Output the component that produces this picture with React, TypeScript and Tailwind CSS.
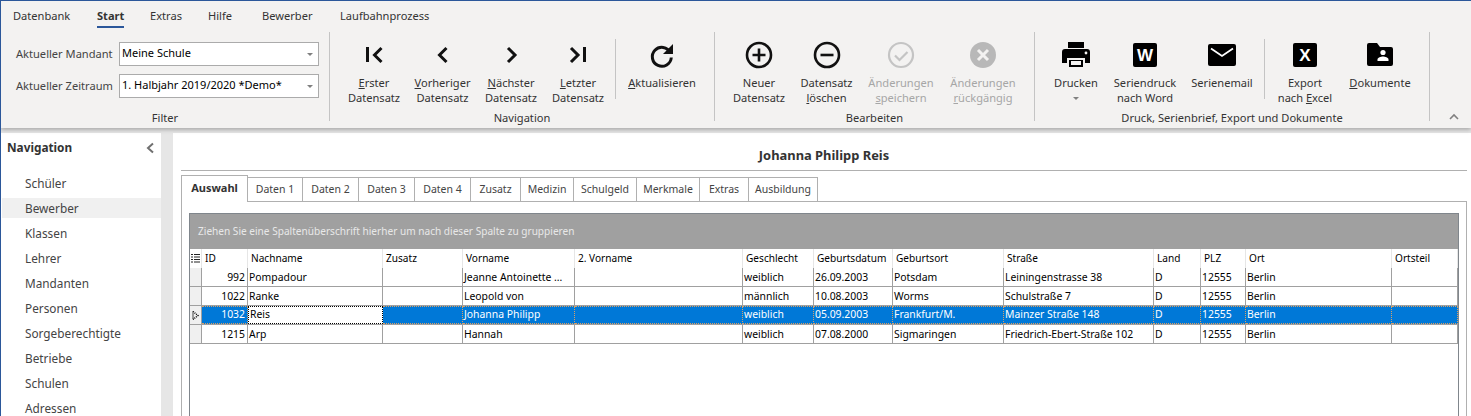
import React from 'react';

const navItems = ['Schüler', 'Bewerber', 'Klassen', 'Lehrer', 'Mandanten', 'Personen', 'Sorgeberechtigte', 'Betriebe', 'Schulen', 'Adressen'];

const tabs = [
  { label: 'Daten 1', w: 'w-[55px]' },
  { label: 'Daten 2', w: 'w-[56px]' },
  { label: 'Daten 3', w: 'w-[56px]' },
  { label: 'Daten 4', w: 'w-[56px]' },
  { label: 'Zusatz', w: 'w-[50px]' },
  { label: 'Medizin', w: 'w-[53px]' },
  { label: 'Schulgeld', w: 'w-[63px]' },
  { label: 'Merkmale', w: 'w-[63px]' },
  { label: 'Extras', w: 'w-[49px]' },
  { label: 'Ausbildung', w: 'w-[69px]' },
];

const columns = ['ID', 'Nachname', 'Zusatz', 'Vorname', '2. Vorname', 'Geschlecht', 'Geburtsdatum', 'Geburtsort', 'Straße', 'Land', 'PLZ', 'Ort', 'Ortsteil'];

const rows = [
  ['992', 'Pompadour', '', 'Jeanne Antoinette ...', '', 'weiblich', '26.09.2003', 'Potsdam', 'Leiningenstrasse 38', 'D', '12555', 'Berlin', ''],
  ['1022', 'Ranke', '', 'Leopold von', '', 'männlich', '10.08.2003', 'Worms', 'Schulstraße 7', 'D', '12555', 'Berlin', ''],
  ['1032', 'Reis', '', 'Johanna Philipp', '', 'weiblich', '05.09.2003', 'Frankfurt/M.', 'Mainzer Straße 148', 'D', '12555', 'Berlin', ''],
  ['1215', 'Arp', '', 'Hannah', '', 'weiblich', '07.08.2000', 'Sigmaringen', 'Friedrich-Ebert-Straße 102', 'D', '12555', 'Berlin', ''],
];

const gridCols = 'grid grid-cols-[12px_46px_135px_80px_112px_168px_71px_79px_111px_150px_47px_45px_146px_66px]';

const Icon: React.FC<{ children: React.ReactNode }> = ({ children }) => (
  <svg width="32" height="32" viewBox="0 0 32 32" className="shrink-0">{children}</svg>
);

const RibbonButton: React.FC<{ w: string; icon: React.ReactNode; disabled?: boolean; children: React.ReactNode }> = ({ w, icon, disabled, children }) => (
  <div className={`${w} flex flex-col items-center pt-[7px] text-center leading-[15px] ${disabled ? 'text-[#a6a6a6]' : 'text-[#333]'}`}>
    <Icon>{icon}</Icon>
    <div className="mt-[4px] whitespace-nowrap">{children}</div>
  </div>
);

const InnerSep = () => <div className="w-px h-[60px] mt-[7px] bg-[#c4c4c4] shrink-0" />;
const OuterSep = () => <div className="w-px h-[89px] bg-[#c4c4c4] shrink-0" />;

const Section: React.FC<{ w: string; label: string; children: React.ReactNode }> = ({ w, label, children }) => (
  <div className={`${w} flex shrink-0`}>
    <div className="flex-1 flex flex-col min-w-0">
      <div className="h-[78px] flex pl-[10px]">{children}</div>
      <div className="h-[16px] leading-[16px] text-center text-[#333]">{label}</div>
    </div>
    <OuterSep />
  </div>
);

const Combo: React.FC<{ label: string; value: string }> = ({ label, value }) => (
  <div className="flex items-center">
    <div className="w-[103px] text-[#444] whitespace-nowrap">{label}</div>
    <div className="w-[200px] h-[24px] bg-white border border-[#ababab] flex items-center justify-between pl-[2px] pr-[5px] pb-[2px] text-black text-[11px]">
      <span className="whitespace-nowrap">{value}</span>
      <span className="w-0 h-0 mt-[2px] border-x-[3px] border-x-transparent border-t-[3px] border-t-[#808080]" />
    </div>
  </div>
);

export default function App() {
  return (
    <div className="w-[1471px] h-[416px] overflow-hidden bg-[#e6e6e6] border-l border-t border-[#2b579a] font-['Noto_Sans',sans-serif] text-[11.1px] flex flex-col">
      <div className="relative z-10 bg-[#f3f2f1] h-[127px] shrink-0 shadow-[0_2px_4px_rgba(0,0,0,0.25)]">
        <div className="h-[31px] flex items-start text-[#333] pt-[7px]">
          <div className="ml-[12px] w-[84px]">Datenbank</div>
          <div className="w-[53px] font-bold">
            <span className="inline-block border-b-[2px] border-[#2b579a] pb-[1px]">Start</span>
          </div>
          <div className="w-[58px]">Extras</div>
          <div className="w-[54px]">Hilfe</div>
          <div className="w-[78px]">Bewerber</div>
          <div>Laufbahnprozess</div>
        </div>
        <div className="flex">
          <div className="w-[329px] flex shrink-0">
            <div className="flex-1 flex flex-col">
              <div className="h-[78px] pl-[15px] pt-[10px] flex flex-col gap-[8px]">
                <Combo label="Aktueller Mandant" value="Meine Schule" />
                <Combo label="Aktueller Zeitraum" value="1. Halbjahr 2019/2020 *Demo*" />
              </div>
              <div className="h-[16px] leading-[16px] text-center text-[#333]">Filter</div>
            </div>
            <OuterSep />
          </div>

          <Section w="w-[385px]" label="Navigation">
            <RibbonButton w="w-[68px]" icon={<g fill="none" stroke="#111" strokeWidth="3"><path d="M9.5 8v15" /><path d="M23.5 9l-7 7 7 7" /></g>}>
              <u>E</u>rster<br />Datensatz
            </RibbonButton>
            <RibbonButton w="w-[69px]" icon={<path d="M19.5 9l-7 7 7 7" fill="none" stroke="#111" strokeWidth="3" />}>
              <u>V</u>orheriger<br />Datensatz
            </RibbonButton>
            <RibbonButton w="w-[68px]" icon={<path d="M13 9l7 7-7 7" fill="none" stroke="#111" strokeWidth="3" />}>
              <u>N</u>ächster<br />Datensatz
            </RibbonButton>
            <RibbonButton w="w-[66px]" icon={<g fill="none" stroke="#111" strokeWidth="3"><path d="M9 9l7 7-7 7" /><path d="M22.5 8v15" /></g>}>
              <u>L</u>etzter<br />Datensatz
            </RibbonButton>
            <div className="w-[4px]" />
            <InnerSep />
            <RibbonButton w="w-[92px]" icon={<g><path d="M24.3 13.5A9.5 9.5 0 1 0 25.3 18.5" fill="none" stroke="#111" strokeWidth="3" /><path d="M27 5v10h-10z" fill="#111" /></g>}>
              <u>A</u>ktualisieren
            </RibbonButton>
          </Section>

          <Section w="w-[320px]" label="Bearbeiten">
            <RibbonButton w="w-[68px]" icon={<g fill="none" stroke="#111" strokeWidth="2.6"><circle cx="16" cy="16" r="12" /><path d="M9.5 16h13M16 9.5v13" /></g>}>
              Neuer<br />Datensatz
            </RibbonButton>
            <RibbonButton w="w-[67px]" icon={<g fill="none" stroke="#111" strokeWidth="2.6"><circle cx="16" cy="16" r="12" /><path d="M9.5 16h13" /></g>}>
              Datensatz<br /><u>l</u>öschen
            </RibbonButton>
            <RibbonButton w="w-[82px]" disabled icon={<g fill="none" stroke="#c4c4c4" strokeWidth="2.2"><circle cx="16" cy="16" r="12" /><path d="M10 16.5l4.5 4.5 8-8" /></g>}>
              Änderungen<br /><u>s</u>peichern
            </RibbonButton>
            <RibbonButton w="w-[82px]" disabled icon={<g><circle cx="16" cy="16" r="13" fill="#b8b8b8" /><path d="M11 11l10 10M21 11L11 21" stroke="#f3f2f1" strokeWidth="3" /></g>}>
              Änderungen<br /><u>r</u>ückgängig
            </RibbonButton>
          </Section>

          <Section w="w-[395px]" label="Druck, Serienbrief, Export und Dokumente">
            <div className="w-[62px] flex flex-col items-center pt-[7px] text-center leading-[15px] text-[#333]">
              <Icon>
                <path d="M8 3h16v6H8zM5 10h22a3 3 0 0 1 3 3v11h-5v-5H7v5H2V13a3 3 0 0 1 3-3zM9 21h14v7H9z" fill="#000" />
                <rect x="11" y="22" width="10" height="4" fill="#f3f2f1" />
                <circle cx="26" cy="14" r="1.4" fill="#f3f2f1" />
              </Icon>
              <div className="mt-[4px]">Drucken</div>
              <span className="mt-[7px] w-0 h-0 border-x-[3px] border-x-transparent border-t-[3px] border-t-[#808080]" />
            </div>
            <RibbonButton w="w-[76px]" icon={<g><rect x="4" y="4" width="24" height="24" rx="2" fill="#000" /><text x="16" y="22" textAnchor="middle" fill="#fff" fontSize="17" fontWeight="700" fontFamily="Liberation Sans, sans-serif">W</text></g>}>
              Seriendruck<br />nach Word
            </RibbonButton>
            <RibbonButton w="w-[78px]" icon={<g><rect x="2" y="5" width="28" height="22" rx="2" fill="#000" /><path d="M5 9.5l11 7.5 11-7.5" fill="none" stroke="#fff" strokeWidth="1.8" /></g>}>
              Serienemail
            </RibbonButton>
            <div className="w-[3px]" />
            <InnerSep />
            <div className="w-[5px]" />
            <RibbonButton w="w-[70px]" icon={<g><rect x="4" y="4" width="24" height="24" rx="2" fill="#000" /><text x="16" y="22" textAnchor="middle" fill="#fff" fontSize="17" fontWeight="700" fontFamily="Liberation Sans, sans-serif">X</text></g>}>
              Export<br />nach <u>E</u>xcel
            </RibbonButton>
            <RibbonButton w="w-[80px]" icon={<g><path d="M3 6a2 2 0 0 1 2-2h8l3 4h11a2 2 0 0 1 2 2v15a2 2 0 0 1-2 2H5a2 2 0 0 1-2-2z" fill="#000" /><circle cx="19" cy="13.5" r="2.6" fill="#fff" /><path d="M13.5 22v-1.5c0-1.8 3.5-3 5.5-3s5.5 1.2 5.5 3V22z" fill="#fff" /></g>}>
              <u>D</u>okumente
            </RibbonButton>
          </Section>

          <div className="flex-1 flex justify-center items-end h-[89px]">
            <svg width="12" height="8" viewBox="0 0 12 8" className="ml-[6px]"><path d="M2 6l4-4 4 4" fill="none" stroke="#808080" strokeWidth="1.6" /></svg>
          </div>
        </div>
      </div>

      <div className="flex-1 min-h-0 flex mt-[5px]">
        <div className="w-[160px] shrink-0 bg-white flex flex-col overflow-hidden text-[11.8px] text-[#444]">
          <div className="h-[30px] shrink-0 flex items-center justify-between pl-[6px] pr-[6px] mb-[8px]">
            <span className="font-bold text-[#333]">Navigation</span>
            <svg width="10" height="12" viewBox="0 0 10 12"><path d="M8 1.5L3 6l5 4.5" fill="none" stroke="#707070" strokeWidth="2" /></svg>
          </div>
          {navItems.map(item => (
            <div key={item} className="h-[25px] shrink-0 flex items-center pl-[24px] relative">
              {item === 'Bewerber' && <div className="absolute left-[1px] right-0 top-[2px] bottom-[3px] bg-[#f0f0f0]" />}
              <span className="relative">{item}</span>
            </div>
          ))}
        </div>

        <div className="ml-[12px] flex-1 bg-white pl-[8px] pr-[4px] flex flex-col min-w-0">
          <div className="h-[38px] shrink-0 border-b border-[#b0b0b0] flex items-start justify-center pt-[13px] font-bold text-[12.9px] leading-[18px] text-[#333]">
            Johanna Philipp Reis
          </div>

          <div className="mt-[4px] flex h-[26px] shrink-0 items-start relative z-10">
            <div className="w-[67px] h-[27px] bg-white border-x border-t border-[#b0b0b0] font-bold text-[#333] text-[11px] flex items-center justify-center pb-[2px]">Auswahl</div>
            {tabs.map(t => (
              <div key={t.label} className={`${t.w} h-[24px] mt-[2px] border-t border-r border-[#b0b0b0] text-[#444] flex items-center justify-center text-[10.5px]`}>
                {t.label}
              </div>
            ))}
          </div>

          <div className="flex-1 min-h-0 border-x border-t border-[#b0b0b0] pl-[7px] pt-[11px] pr-[7px]">
            <div className="h-full border-x border-t border-[#80868c] text-[10.4px] bg-white">
              <div className="h-[35px] bg-[#a0a0a0] text-[#e8e8e8] flex items-center pl-[8px] text-[10.1px]">
                Ziehen Sie eine Spaltenüberschrift hierher um nach dieser Spalte zu gruppieren
              </div>
              <div className={`${gridCols} h-[19px] items-center text-black text-[10.1px]`}>
                <div className="h-full flex items-center justify-center border-r border-[#e6e6e6]">
                  <svg width="9" height="11" viewBox="0 0 9 11"><path d="M0 1.5h2M3 1.5h6M0 4h2M3 4h6M0 6.5h2M3 6.5h6M0 9h2M3 9h6" stroke="#222" strokeWidth="1" /></svg>
                </div>
                {columns.map(c => (
                  <div key={c} className="h-full flex items-center pl-[3px] pt-[1px] border-r border-[#e6e6e6] whitespace-nowrap">{c}</div>
                ))}
              </div>
              {rows.map((row, r) => {
                const selected = r === 2;
                return (
                  <div key={row[0]} className={`${gridCols} h-[19px] border-b border-[#a0a0a0] ${selected ? 'bg-[#0078d7] text-white' : 'text-black'}`}>
                    <div className="bg-[#f0f0f0] border-r border-[#a0a0a0] flex items-center justify-center">
                      {selected && (
                        <svg width="7" height="9" viewBox="0 0 7 9"><path d="M1 .5v8M1 .5l5 4-5 4" fill="none" stroke="#000" strokeWidth="1.4" strokeDasharray="1 1" /></svg>
                      )}
                    </div>
                    {row.map((cell, c) => {
                      const focused = selected && c === 1;
                      return (
                        <div
                          key={c}
                          className={`flex items-center whitespace-nowrap overflow-hidden ${c === 0 ? 'justify-end pr-[2px]' : 'pl-[1px]'} ${
                            focused
                              ? 'bg-white text-black border border-dotted border-black'
                              : selected
                                ? 'border-y border-r border-dotted border-[#d9a066]'
                                : 'border-r border-[#a0a0a0] pt-[1px]'
                          }`}
                        >
                          {cell}
                        </div>
                      );
                    })}
                  </div>
                );
              })}
            </div>
          </div>
        </div>
      </div>
    </div>
  );
}
